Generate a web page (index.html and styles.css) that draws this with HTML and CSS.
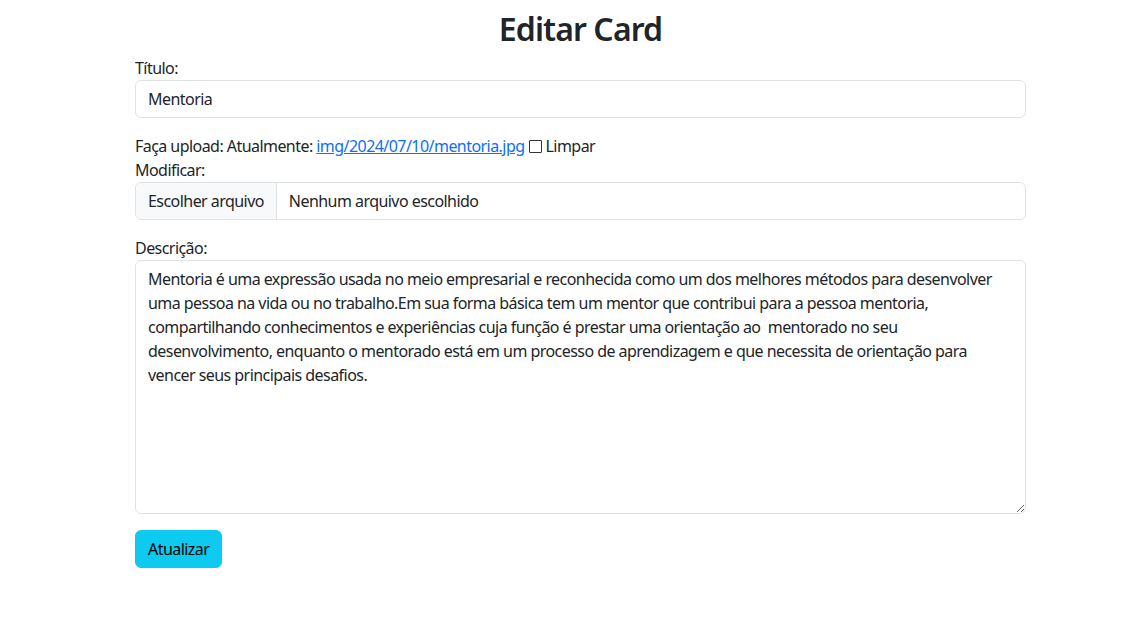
FILE: index.html
```html
<!DOCTYPE html>
<html lang="pt-br">
<head>
<meta charset="utf-8">
<title>Editar Card</title>
<link rel="stylesheet" href="styles.css">
</head>
<body>
<main class="page">
  <h2 class="title">Editar Card</h2>
  <form class="form">
    <div class="field">
      <label class="label" for="titulo">Título:</label>
      <input class="control" id="titulo" type="text" value="Mentoria">
    </div>
    <div class="field">
      <div class="line">Faça upload: Atualmente: <a href="#" class="link">img/2024/07/10/mentoria.jpg</a><input type="checkbox" class="check" id="limpar"><label for="limpar">Limpar</label></div>
      <div class="line">Modificar:</div>
      <div class="file">
        <span class="file-btn">Escolher arquivo</span>
        <span class="file-name">Nenhum arquivo escolhido</span>
      </div>
    </div>
    <div class="field">
      <label class="label" for="descricao">Descrição:</label>
      <textarea class="control area" id="descricao">Mentoria é uma expressão usada no meio empresarial e reconhecida como um dos melhores métodos para desenvolver uma pessoa na vida ou no trabalho.Em sua forma básica tem um mentor que contribui para a pessoa mentoria, compartilhando conhecimentos e experiências cuja função é prestar uma orientação ao  mentorado no seu desenvolvimento, enquanto o mentorado está em um processo de aprendizagem e que necessita de orientação para vencer seus principais desafios.</textarea>
    </div>
    <button type="button" class="btn">Atualizar</button>
  </form>
</main>
</body>
</html>
```
FILE: styles.css
```css
* { box-sizing: border-box; }
html, body { margin: 0; background: #fff; }
body {
  font-family: "Noto Sans", "Open Sans", sans-serif;
  font-size: 16px;
  line-height: 24px;
  letter-spacing: -0.55px;
  color: #212529;
}
.page {
  width: 891px;
  margin-left: 135px;
  padding-top: 10px;
}
.title {
  margin: 0 0 8px;
  text-align: center;
  font-size: 32px;
  line-height: 38px;
  font-weight: 600;
  letter-spacing: -0.9px;
}
.form { display: flex; flex-direction: column; align-items: flex-start; }
.field { width: 100%; margin-bottom: 16px; }
.label, .line { display: block; }
.control {
  display: block;
  width: 100%;
  height: 38px;
  padding: 6px 12px;
  font: inherit;
  letter-spacing: inherit;
  color: #212529;
  border: 1px solid #dee2e6;
  border-radius: 6px;
  background: #fff;
}
.area { height: 254px; resize: vertical; line-height: 24px; }
.link { color: #0d6efd; text-decoration: underline; }
.check {
  appearance: none;
  width: 13px;
  height: 13px;
  margin: 0 4px 0 4px;
  vertical-align: -1px;
  border: 1px solid #333;
  border-radius: 1px;
  background: #fff;
}
.file {
  display: flex;
  align-items: center;
  height: 38px;
  border: 1px solid #dee2e6;
  border-radius: 6px;
  overflow: hidden;
}
.file-btn {
  height: 100%;
  display: flex;
  align-items: center;
  padding: 0 12px;
  background: #f8f9fa;
  border-right: 1px solid #dee2e6;
}
.file-name { padding-left: 12px; }
.btn {
  font: inherit;
  letter-spacing: inherit;
  color: #000;
  background: #0dcaf0;
  border: 1px solid #0dcaf0;
  border-radius: 6px;
  height: 38px;
  padding: 6px 12px;
}
```
